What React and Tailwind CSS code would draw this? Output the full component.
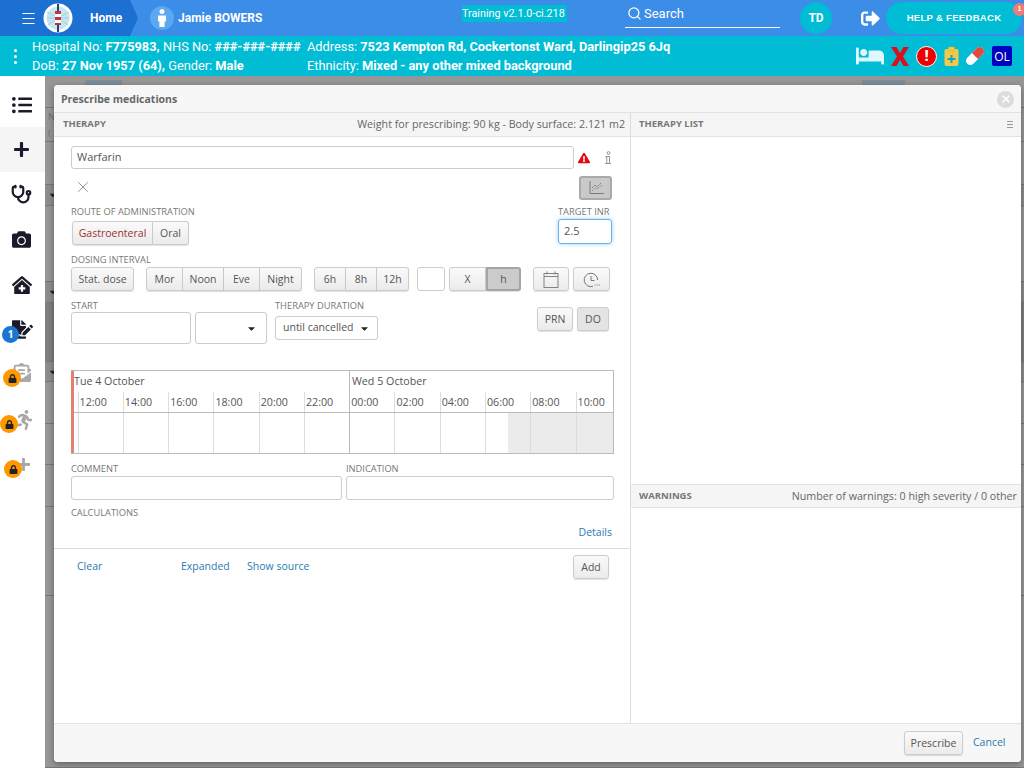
import React from "react";
import {
  FaListUl, FaPlus, FaCamera, FaClinicMedical, FaFileSignature, FaEnvelopeOpenText, FaRunning,
  FaLock, FaSignOutAlt, FaBed, FaExclamationTriangle, FaCaretDown,
} from "react-icons/fa";
import { Menu, Search, Stethoscope, X } from "lucide-react";

const Label = ({ children, className = "" }) => (
  <div className={`text-[9.3px] leading-[12px] text-[#777] whitespace-nowrap ${className}`}>{children}</div>
);

const Btn = ({ children, className = "" }) => (
  <button className={`h-[24px] shrink-0 pt-[1px] flex items-center justify-center text-[10.5px] text-[#555] border border-[#ccc] bg-gradient-to-b from-[#fafafa] to-[#ebebeb] shadow-[0_1px_1px_rgba(0,0,0,0.12)] ${className}`}>
    {children}
  </button>
);

const hours = ["12:00", "14:00", "16:00", "18:00", "20:00", "22:00", "00:00", "02:00", "04:00", "06:00", "08:00", "10:00"];

// what shows of the table behind the dialog, top to bottom
const behindRows = [
  { h: 23 },
  { h: 34, text: true },
  { h: 43 },
  { h: 21, bg: "bg-[#8c8c8c]", caret: true },
  { h: 76 },
  { h: 21, bg: "bg-[#8c8c8c]", caret: true },
  { h: 59, bg: "bg-[#7f7f7f]" },
  { h: 20, bg: "bg-[#8c8c8c]", caret: true },
  { h: 42 },
  { h: 41 },
  { h: 42 },
  { h: 89 },
  { h: 172 },
];

const SideItem = ({ icon, badge, active }) => (
  <div className={`relative h-[45px] flex items-center justify-center pr-[2px] ${active ? "bg-[#f5f5f5]" : ""}`}>
    {icon}
    {badge}
  </div>
);

const LockBadge = ({ className }) => (
  <div className={`absolute w-[18px] h-[18px] rounded-full bg-[#ff9800] flex items-center justify-center ${className}`}>
    <FaLock className="text-[#222] text-[9px]" />
  </div>
);

export default function App() {
  return (
    <div className="relative w-[1024px] h-[768px] overflow-hidden flex flex-col bg-[#969696] font-['Open_Sans',sans-serif]">
      {/* Top bar */}
      <div className="h-[36px] shrink-0 flex items-center bg-[#3b8de8] text-white font-['Roboto',sans-serif]">
        <div className="h-full w-[138px] shrink-0 pl-[20px] flex items-center bg-[#1c70d2] [clip-path:polygon(0_0,130px_0,138px_18px,130px_36px,0_36px)]">
          <Menu size={17} strokeWidth={1.5} />
          <svg width="30" height="30" viewBox="0 0 30 30" className="ml-[6px]">
            <circle cx="15" cy="15" r="14.5" fill="#fff" />
            <circle cx="15" cy="15" r="11.5" fill="#c4e6f1" />
            <path d="M15 15L4 9M15 15L4 15M15 15L5 22M15 15L26 9M15 15L26 15M15 15L25 22" stroke="#8cc6dc" strokeWidth="0.7" />
            <rect x="14" y="1" width="2" height="28" fill="#22496e" />
            <path d="M12 8h6v3h-6zM12 14h6v3h-6zM12 20h6v2h-6z" fill="#c8303a" />
            <path d="M12 11h6v3h-6zM12 17h6v3h-6z" fill="#fff" />
          </svg>
          <span className="ml-[17px] text-[12px] font-bold">Home</span>
        </div>
        <div className="ml-[12px] w-[24px] h-[24px] shrink-0 rounded-full bg-[#5ba7f2] flex items-center justify-center">
          <svg width="10" height="18" viewBox="0 0 10 18" fill="#fff">
            <circle cx="5" cy="2.5" r="2.5" />
            <path d="M1 6.5h8v6H7.6V18H2.4v-5.5H1z" />
          </svg>
        </div>
        <span className="ml-[4px] w-[84px] shrink-0 whitespace-nowrap text-[12px] font-bold">Jamie BOWERS</span>
        <div className="ml-[200px] mb-[9px] h-[17px] w-[105px] shrink-0 bg-[#00bcd4] text-[10.8px] leading-[17px] whitespace-nowrap">Training v2.1.0-ci.218</div>
        <div className="ml-[58px] w-[155px] h-[24px] mb-[4px] pt-[2px] shrink-0 flex items-start border-b border-white">
          <Search size={15} className="ml-[2px]" />
          <span className="ml-[2px] text-[13px] leading-[15px]">Search</span>
        </div>
        <div className="ml-[20px] w-[32px] h-[32px] shrink-0 rounded-full bg-[#00bcd4] flex items-center justify-center text-[12px] font-bold">TD</div>
        <FaSignOutAlt className="ml-[29px] shrink-0 text-[19px]" />
        <div className="relative ml-[6px] w-[136px] h-[32px] shrink-0 rounded-full bg-[#00bcd4] flex items-center justify-center text-[9.5px] font-bold tracking-[0.3px] font-['Liberation_Sans',sans-serif]">
          HELP &amp; FEEDBACK
          <div className="absolute top-[1px] right-[-4px] w-[13px] h-[13px] rounded-full bg-[#ef7b73] flex items-center justify-center text-[7px]">1</div>
        </div>
      </div>

      {/* Patient bar */}
      <div className="h-[40px] shrink-0 flex items-center bg-[#00bcd4] text-white text-[12.8px] leading-[19px] font-['Roboto',sans-serif]">
        <div className="w-[30px] mr-[2px] flex flex-col items-center gap-[3px]">
          <div className="w-[3px] h-[3px] rounded-full bg-white" />
          <div className="w-[3px] h-[3px] rounded-full bg-white" />
          <div className="w-[3px] h-[3px] rounded-full bg-white" />
        </div>
        <div className="w-[275px] whitespace-nowrap">
          <div>Hospital No: <b>F775983,</b> NHS No: <b>###-###-####</b></div>
          <div>DoB: <b>27 Nov 1957 (64),</b> Gender: <b>Male</b></div>
        </div>
        <div className="w-[549px] whitespace-nowrap">
          <div>Address: <b>7523 Kempton Rd, Cockertonst Ward, Darlingip25 6Jq</b></div>
          <div>Ethnicity: <b>Mixed - any other mixed background</b></div>
        </div>
        <FaBed className="text-[#e0f7fb] text-[28px]" />
        <svg width="18" height="19" viewBox="0 0 18 19" className="ml-[7px]">
          <path d="M0 0h5.5L9 6l3.5-6H18l-6 9.5 6 9.5h-5.5L9 13l-3.5 6H0l6-9.5z" fill="#d8121c" />
        </svg>
        <div className="ml-[7px] w-[21px] h-[21px] rounded-full bg-[#ee0000] border border-white flex items-center justify-center text-white text-[15px] font-black leading-none">!</div>
        <svg width="15" height="20" viewBox="0 0 15 20" className="ml-[7px]">
          <rect x="0.5" y="3" width="14" height="17" rx="2" fill="#f2c94c" />
          <rect x="4.5" y="1" width="6" height="4" rx="1" fill="#f2c94c" stroke="#d9ad2c" strokeWidth="0.5" />
          <path d="M6.5 9h2v3h3v2h-3v3h-2v-3h-3v-2h3z" fill="#17a5bd" />
        </svg>
        <svg width="20" height="20" viewBox="0 0 21 21" className="ml-[6px]">
          <g transform="rotate(-45 10.5 10.5)">
            <rect x="-1" y="6" width="23" height="9" rx="4.5" fill="#fff" />
            <path d="M10.5 6h7a4.5 4.5 0 0 1 0 9h-7z" fill="#e5483f" />
          </g>
        </svg>
        <div className="ml-[7px] w-[20px] h-[20px] rounded-[2px] bg-[#0000c0] flex items-center justify-center text-[12px] font-['Open_Sans',sans-serif]">OL</div>
      </div>

      {/* Body */}
      <div className="relative flex-1 flex min-h-0">
        <div className="w-[45px] shrink-0 bg-white pt-[6px]">
          <SideItem icon={<FaListUl className="text-[#1a1a2a] text-[20px]" />} />
          <SideItem active icon={<FaPlus className="text-[#1a1a2a] text-[17px]" />} />
          <SideItem icon={<Stethoscope size={21} strokeWidth={2.5} className="text-[#1a1a2a]" />} />
          <SideItem icon={<FaCamera className="text-[#1a1a2a] text-[19px]" />} />
          <SideItem icon={<FaClinicMedical className="text-[#1a1a2a] text-[20px]" />} />
          <SideItem
            icon={<FaFileSignature className="text-[#1a1a2a] text-[21px] ml-[2px]" />}
            badge={<div className="absolute left-[2px] top-[19px] w-[17px] h-[17px] rounded-full bg-[#1976d2] text-white text-[10px] font-bold flex items-center justify-center">1</div>}
          />
          <SideItem
            icon={<FaEnvelopeOpenText className="text-[#a8a8a8] text-[19px] mb-[4px]" />}
            badge={<LockBadge className="left-[3px] top-[17px]" />}
          />
          <SideItem
            icon={<FaRunning className="text-[#a8a8a8] text-[20px] ml-[4px]" />}
            badge={<LockBadge className="left-[0px] top-[18px]" />}
          />
          <SideItem
            icon={<FaPlus className="text-[#a8a8a8] text-[15px] ml-[4px]" />}
            badge={<LockBadge className="left-[4px] top-[18px]" />}
          />
        </div>

        {/* Page behind the dialog */}
        <div className="flex-1 flex flex-col overflow-hidden">
          <div className="h-[9px] shrink-0 pt-[4px] flex">
            <div className="ml-[40px] w-[37px] bg-[#7d8c99]" />
            <div className="ml-[740px] w-[43px] bg-[#7d8c99]" />
          </div>
          {behindRows.map((r, i) => (
            <div key={i} style={{ height: r.h }} className={`shrink-0 flex items-center pl-[3px] border-b border-[#777] ${r.bg || ""}`}>
              {r.caret && <FaCaretDown className="text-[#222] text-[10px]" />}
              {r.text && (
                <div className="text-[9.5px] leading-[16px] text-[#6f6f6f]">
                  <div>N</div>
                  <div>(</div>
                </div>
              )}
            </div>
          ))}
        </div>

        {/* Dialog */}
        <div className="absolute left-[54px] top-[9px] w-[967px] h-[677px] flex flex-col bg-white rounded-[4px] shadow-[0_2px_6px_rgba(0,0,0,0.35)] overflow-hidden">
          <div className="h-[28px] shrink-0 flex items-center justify-between pl-[7px] pr-[7px] bg-[#f7f7f7] border-b border-[#e2e2e2]">
            <span className="pt-[2px] text-[10.5px] font-bold text-[#666]">Prescribe medications</span>
            <div className="mt-[1px] w-[17px] h-[17px] rounded-full bg-[#dcdcdc] flex items-center justify-center">
              <X size={12} strokeWidth={3} className="text-white" />
            </div>
          </div>

          <div className="flex-1 flex min-h-0">
            {/* Therapy */}
            <div className="w-[577px] shrink-0 flex flex-col border-r border-[#ddd]">
              <div className="h-[24px] shrink-0 flex items-center justify-between pl-[9px] pr-[5px] bg-[#f5f5f5] border-b border-[#e2e2e2]">
                <span className="text-[9.5px] font-bold text-[#777]">THERAPY</span>
                <span className="text-[10.7px] text-[#666]">Weight for prescribing: 90 kg - Body surface: 2.121 m2</span>
              </div>

              <div className="flex-1 pl-[17px] pr-[16px]">
                <div className="mt-[9px] flex items-center">
                  <div className="w-[503px] h-[23px] pl-[5px] flex items-center text-[11px] text-[#555] border border-[#ccc] rounded-[3px]">Warfarin</div>
                  <FaExclamationTriangle className="ml-[4px] text-[#e30b0b] text-[12px]" />
                  <svg width="8" height="14" viewBox="0 0 8 14" fill="none" stroke="#8a8a8a" strokeWidth="0.9" className="ml-[14px]">
                    <circle cx="4.5" cy="2" r="1.4" />
                    <path d="M2 5.5h3.5v6.2l1.2.8H1.4l1.4-.8V6.6H2z" />
                  </svg>
                </div>

                <div className="mt-[7px] flex items-center justify-between pr-[2px]">
                  <X size={18} strokeWidth={1} className="ml-[3px] -mt-[3px] text-[#777]" />
                  <button className="w-[33px] h-[24px] flex items-center justify-center bg-[#c9c9c9] border-2 border-[#aaa] rounded-[3px]">
                    <svg width="16" height="14" viewBox="0 0 16 14" fill="none" stroke="#666" strokeWidth="0.8">
                      <path d="M2 0v12.5h14" />
                      <path d="M4 7l3-3 2 2 4-4" strokeDasharray="1.5 0.7" />
                      <path d="M4 10l3-3 2 1 5-4" strokeDasharray="1 1" />
                    </svg>
                  </button>
                </div>

                <div className="mt-[6px] flex justify-between pr-[2px]">
                  <div>
                    <Label>ROUTE OF ADMINISTRATION</Label>
                    <div className="mt-[3px] ml-[1px] flex">
                      <Btn className="w-[81px] rounded-l-[3px] !text-[#9c3030]">Gastroenteral</Btn>
                      <Btn className="w-[36px] rounded-r-[3px] border-l-0">Oral</Btn>
                    </div>
                  </div>
                  <div className="w-[54px]">
                    <Label>TARGET INR</Label>
                    <div className="mt-[1px] h-[25px] pl-[5px] flex items-center text-[11px] text-[#555] border border-[#66afe9] rounded-[3px] shadow-[0_0_4px_rgba(102,175,233,0.6)]">2.5</div>
                  </div>
                </div>

                <Label className="mt-[9px]">DOSING INTERVAL</Label>
                <div className="mt-[1px] flex items-center">
                  <Btn className="w-[63px] rounded-[3px]">Stat. dose</Btn>
                  <div className="ml-[12px] flex">
                    <Btn className="w-[37px] rounded-l-[3px]">Mor</Btn>
                    <Btn className="w-[41px] border-l-0">Noon</Btn>
                    <Btn className="w-[36px] border-l-0">Eve</Btn>
                    <Btn className="w-[42px] border-l-0 rounded-r-[3px]">Night</Btn>
                  </div>
                  <div className="ml-[12px] flex">
                    <Btn className="w-[32px] rounded-l-[3px]">6h</Btn>
                    <Btn className="w-[31px] border-l-0">8h</Btn>
                    <Btn className="w-[32px] border-l-0 rounded-r-[3px]">12h</Btn>
                  </div>
                  <div className="ml-[8px] w-[28px] h-[24px] shrink-0 border border-[#ccc] rounded-[3px]" />
                  <div className="ml-[4px] flex">
                    <Btn className="w-[37px] rounded-l-[3px]">X</Btn>
                    <Btn className="w-[35px] rounded-r-[3px] !bg-none !bg-[#cbcbcb] border-2 !border-[#a5a5a5]">h</Btn>
                  </div>
                  <Btn className="ml-[12px] w-[36px] rounded-[3px]">
                    <svg width="16" height="17" viewBox="0 0 16 17" fill="none" stroke="#777" strokeWidth="0.9">
                      <rect x="1" y="2.5" width="14" height="14" />
                      <path d="M1 5.5h14M4 0.5v3M12 0.5v3" />
                    </svg>
                  </Btn>
                  <Btn className="ml-[4px] w-[37px] rounded-[3px]">
                    <svg width="17" height="16" viewBox="0 0 17 16" fill="none" stroke="#777" strokeWidth="1">
                      <path d="M10 14.3A6.7 6.7 0 1 1 14.6 8" />
                      <path d="M8 4v4.5h3.5" />
                      <path d="M11.5 13h1M13.7 13h1M15.9 13h1" strokeWidth="1.2" />
                    </svg>
                  </Btn>
                </div>

                <div className="mt-[9px] flex">
                  <div>
                    <Label>START</Label>
                    <div className="flex">
                      <div className="w-[120px] h-[32px] border border-[#ccc] rounded-[3px]" />
                      <div className="ml-[4px] w-[72px] h-[32px] flex items-center justify-end pr-[9px] border border-[#ccc] rounded-[3px]">
                        <FaCaretDown className="text-[#222] text-[11px]" />
                      </div>
                    </div>
                  </div>
                  <div className="ml-[8px]">
                    <Label>THERAPY DURATION</Label>
                    <div className="mt-[4px] w-[103px] h-[24px] flex items-center justify-between pl-[7px] pr-[7px] text-[10.5px] text-[#555] border border-[#ccc] rounded-[3px]">
                      until cancelled
                      <FaCaretDown className="text-[#222] text-[11px]" />
                    </div>
                  </div>
                  <div className="ml-auto mr-[5px] mt-[7px] flex gap-[4px]">
                    <Btn className="w-[36px] rounded-[3px]">PRN</Btn>
                    <Btn className="w-[32px] rounded-[3px] !bg-none !bg-[#e4e4e4]">DO</Btn>
                  </div>
                </div>

                {/* Timeline */}
                <div className="mt-[26px] w-[543px] h-[84px] flex flex-col border border-[#bbb] border-l-0 text-[10.7px] text-[#555] relative">
                  <div className="absolute left-0 top-0 bottom-0 w-[3px] bg-[#e57f72]" />
                  <div className="h-[21px] shrink-0 flex items-center">
                    <div className="w-[279px] pl-[3px] border-r border-[#bbb] h-full flex items-center">Tue 4 October</div>
                    <div className="pl-[2px]">Wed 5 October</div>
                  </div>
                  <div className="h-[21px] shrink-0 flex pl-[6.6px] border-b border-[#bbb]">
                    {hours.map((h, i) => (
                      <div key={h} className={`${i === 11 ? "flex-1" : "w-[45.27px] shrink-0"} pl-[1px] pt-[1px] flex items-center border-l ${i === 6 ? "border-[#bbb]" : "border-[#ddd]"}`}>{h}</div>
                    ))}
                  </div>
                  <div className="flex-1 flex pl-[6.6px]">
                    {hours.map((h, i) => (
                      <div key={h} className={`${i === 11 ? "flex-1" : "w-[45.27px] shrink-0"} flex border-l ${i === 6 ? "border-[#bbb]" : "border-[#ddd]"} ${i > 9 ? "bg-[#ebebeb]" : ""}`}>
                        {i === 9 && <div className="ml-[22px] flex-1 bg-[#ebebeb]" />}
                      </div>
                    ))}
                  </div>
                </div>

                <div className="mt-[9px] flex gap-[4px]">
                  <div className="w-[271px]">
                    <Label>COMMENT</Label>
                    <div className="mt-[1px] h-[24px] border border-[#ccc] rounded-[3px]" />
                  </div>
                  <div className="w-[268px]">
                    <Label>INDICATION</Label>
                    <div className="mt-[1px] h-[24px] border border-[#ccc] rounded-[3px]" />
                  </div>
                </div>

                <Label className="mt-[7px]">CALCULATIONS</Label>
                <div className="mt-[6px] pr-[2px] text-right text-[10.5px] leading-[14px] text-[#2a7ab0]">Details</div>

                <div className="mt-[9px] -mx-[17px] h-px bg-[#ddd]" />
                <div className="mt-[6px] flex items-center text-[10.5px] text-[#2a7ab0] pr-[5px]">
                  <span className="ml-[6px] w-[104px]">Clear</span>
                  <span className="w-[66px]">Expanded</span>
                  <span>Show source</span>
                  <Btn className="ml-auto w-[36px] rounded-[3px]">Add</Btn>
                </div>
              </div>
            </div>

            {/* Right column */}
            <div className="flex-1 flex flex-col">
              <div className="h-[24px] shrink-0 flex items-center justify-between pl-[8px] pr-[8px] bg-[#f5f5f5] border-b border-[#e2e2e2]">
                <span className="text-[9.5px] font-bold text-[#777]">THERAPY LIST</span>
                <div className="flex flex-col gap-[2px]">
                  <div className="w-[6px] h-px bg-[#999]" />
                  <div className="w-[6px] h-px bg-[#999]" />
                  <div className="w-[6px] h-px bg-[#999]" />
                </div>
              </div>
              <div className="h-[347px] shrink-0" />
              <div className="h-[24px] shrink-0 flex items-center justify-between pl-[8px] pr-[4px] bg-[#f5f5f5] border-y border-[#e2e2e2]">
                <span className="text-[9.5px] font-bold text-[#777]">WARNINGS</span>
                <span className="text-[10.7px] text-[#666]">Number of warnings: 0 high severity / 0 other</span>
              </div>
            </div>
          </div>

          <div className="h-[39px] shrink-0 flex items-center justify-end pr-[15px] bg-[#f7f7f7] border-t border-[#e2e2e2]">
            <Btn className="w-[59px] rounded-[3px]">Prescribe</Btn>
            <span className="ml-[10px] w-[33px] text-[10.5px] text-[#2a7ab0]">Cancel</span>
          </div>
        </div>
      </div>
    </div>
  );
}
